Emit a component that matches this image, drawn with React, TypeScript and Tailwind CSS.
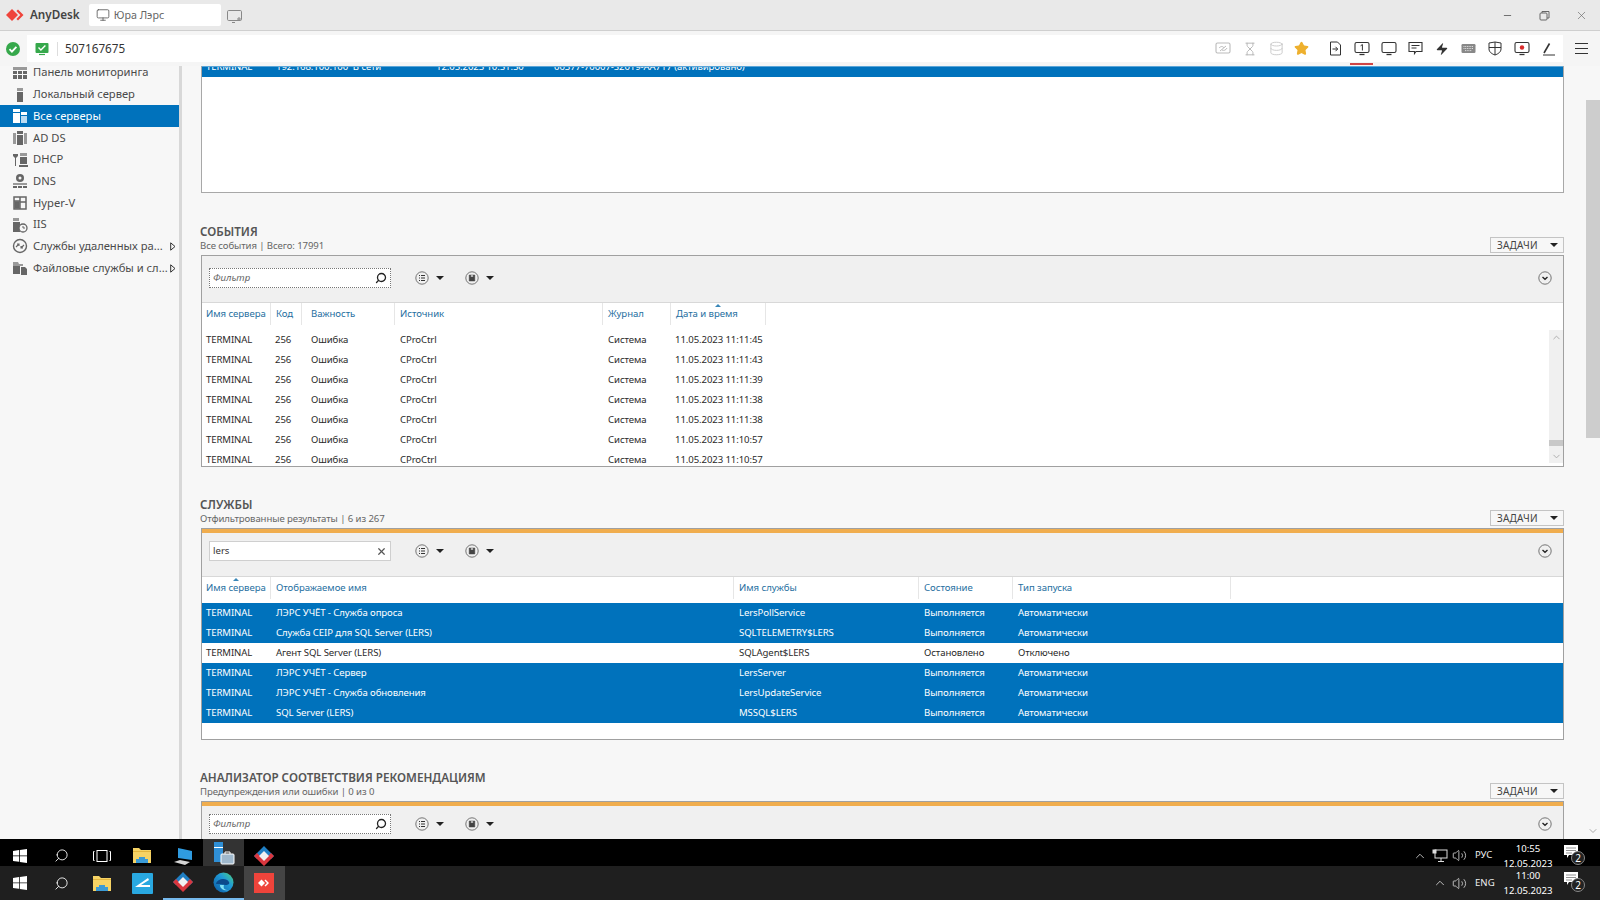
import React from "react";
import { Monitor, Search, X, Minus, Star, Zap, ChevronUp, ChevronDown, Hourglass, Database, Volume2 } from "lucide-react";

const SIDE: [string, string, boolean][] = [
  ["Панель мониторинга", "grid", false],
  ["Локальный сервер", "tower", false],
  ["Все серверы", "servers", false],
  ["AD DS", "adds", false],
  ["DHCP", "dhcp", false],
  ["DNS", "dns", false],
  ["Hyper-V", "hyperv", false],
  ["IIS", "iis", false],
  ["Службы удаленных ра...", "remote", true],
  ["Файловые службы и сл...", "files", true],
];

function SideIcon({ kind, active }: { kind: string; active: boolean }) {
  const c = active ? "#ffffff" : "#666666";
  const d = active ? "#bcdcf2" : "#999999";
  return (
    <svg width="16" height="16" viewBox="0 0 16 16" className="shrink-0">
      {kind === "grid" && (
        <g fill={c}>
          <rect x="1" y="2" width="14" height="3" fill={d} />
          <rect x="1" y="6" width="4" height="3" /><rect x="6" y="6" width="4" height="3" /><rect x="11" y="6" width="4" height="3" />
          <rect x="1" y="10" width="4" height="4" /><rect x="6" y="10" width="4" height="4" /><rect x="11" y="10" width="4" height="4" />
        </g>
      )}
      {kind === "tower" && (<g><rect x="5" y="1" width="6" height="3" fill={d} /><rect x="5" y="5" width="6" height="10" fill={c} /></g>)}
      {kind === "servers" && (<g><rect x="1" y="1" width="7" height="3" fill={c} /><rect x="1" y="5" width="7" height="10" fill={c} /><rect x="9" y="4" width="6" height="3" fill={c} /><rect x="9" y="8" width="6" height="7" fill={d} /></g>)}
      {kind === "adds" && (<g><rect x="1" y="3" width="3" height="11" fill={d} /><rect x="12" y="3" width="3" height="11" fill={d} /><rect x="5" y="1" width="6" height="3" fill={c} /><rect x="5" y="5" width="6" height="10" fill={c} /></g>)}
      {kind === "dhcp" && (<g><path d="M1 2h5v2L4 6v8H3V6L1 4z" fill={c} /><rect x="8" y="1" width="7" height="3" fill={d} /><rect x="8" y="5" width="7" height="7" fill={c} /><rect x="7" y="13" width="9" height="2" fill={c} /></g>)}
      {kind === "dns" && (<g><circle cx="8" cy="5" r="4" fill={c} /><circle cx="8" cy="5" r="1.5" fill="#f7f7f7" /><rect x="1" y="10" width="14" height="2" fill={d} /><rect x="1" y="13" width="4" height="2" fill={c} /><rect x="6" y="13" width="4" height="2" fill={c} /><rect x="11" y="13" width="4" height="2" fill={c} /></g>)}
      {kind === "hyperv" && (<g fill="none" stroke={c} strokeWidth="1.5"><rect x="2" y="2" width="12" height="12" /><path d="M8 2v12M8 7h6M2 6h6" /><rect x="3" y="7" width="4" height="6" fill={c} /></g>)}
      {kind === "iis" && (<g><rect x="1" y="1" width="6" height="3" fill={d} /><rect x="1" y="5" width="7" height="10" fill={c} /><circle cx="11" cy="11" r="4" fill="#f7f7f7" stroke={c} strokeWidth="1.3" /><path d="M11 9v2h2" stroke={c} fill="none" /></g>)}
      {kind === "remote" && (<g fill="none" stroke={c} strokeWidth="1.4"><circle cx="8" cy="8" r="6.5" /><path d="M4 9l3-3M12 7l-3 3M5 6h2v2M11 10H9V8" strokeWidth="1.1" /></g>)}
      {kind === "files" && (<g><path d="M1 2h5l1 2h4v2H1z" fill={d} /><rect x="1" y="6" width="7" height="8" fill={c} /><path d="M9 7h4l2 2v6H9z" fill={c} /></g>)}
    </svg>
  );
}

function Sidebar() {
  return (
    <div className="w-[179px] shrink-0 -mt-[4px] bg-[#f7f7f7]">
      {SIDE.map(([t, k, arrow]) => {
        const active = t === "Все серверы";
        return (
          <div key={t} className={`h-[21.7px] flex items-center pl-[12px] ${active ? "bg-[#0072bc] text-white" : "text-[#4a4a4a]"}`}>
            <SideIcon kind={k} active={active} />
            <span className="ml-[5px] text-[11.2px] whitespace-nowrap w-[134px]">{t}</span>
            {arrow && (
              <svg width="6" height="9" viewBox="0 0 6 9" className="ml-[3px] shrink-0"><path d="M0.7 0.8L5 4.5 0.7 8.2z" fill="#f7f7f7" stroke="#333333" /></svg>
            )}
          </div>
        );
      })}
    </div>
  );
}

function FilterBox({ value }: { value?: string }) {
  return (
    <div className={`w-[182px] h-[20px] bg-white flex items-center pl-[3px] pr-[3px] ${value ? "border border-[#cfcfcf]" : "border border-dotted border-[#777777]"}`}>
      {value ? (
        <span className="flex-1 text-[9.6px] text-[#333333]">{value}</span>
      ) : (
        <span className="flex-1 text-[9.6px] italic text-[#666666]">Фильтр</span>
      )}
      {value ? <X size={11} strokeWidth={2.6} className="text-[#555555]" /> : <Search size={12} strokeWidth={2.6} className="text-[#222222] -scale-x-100" />}
    </div>
  );
}

function Caret() {
  return <span className="ml-[7px] w-0 h-0 border-x-[4px] border-x-transparent border-t-[4px] border-t-[#222222]" />;
}

function CircleBtn({ kind }: { kind: "list" | "save" | "down" }) {
  return (
    <svg width="14" height="14" viewBox="0 0 14 14" fill="none">
      <circle cx="7" cy="7" r="6.2" stroke="#666666" strokeWidth="0.9" />
      {kind === "list" && <path d="M4 4.5h1M6 4.5h4M4 7h1M6 7h4M4 9.5h1M6 9.5h4" stroke="#333333" strokeWidth="1" />}
      {kind === "save" && <path d="M4.2 4h5.6v6H4.2zM5.8 4v2h2.4V4M5.8 10V8h2.4v2" fill="#444444" stroke="#444444" strokeWidth="0.5" />}
      {kind === "down" && <path d="M4.5 6l2.5 2.2L9.5 6" stroke="#222222" strokeWidth="1.4" />}
    </svg>
  );
}

function Toolbar({ value, h }: { value?: string; h: string }) {
  return (
    <div className={`${h} shrink-0 bg-[#f0f0f0] border-b border-[#d8d8d8] flex items-start pl-[7px] pr-[11px]`}>
      <FilterBox value={value} />
      <div className="ml-[24px] h-[20px] flex items-center"><CircleBtn kind="list" /><Caret /></div>
      <div className="ml-[21px] h-[20px] flex items-center"><CircleBtn kind="save" /><Caret /></div>
      <div className="ml-auto h-[20px] flex items-center"><CircleBtn kind="down" /></div>
    </div>
  );
}

function HeaderRow({ cols, sort, h }: { cols: [string, string][]; sort: number; h: string }) {
  return (
    <div className={`${h} shrink-0 bg-white flex items-start`}>
      {cols.map(([t, w], i) => (
        <div key={i} className={`${w} h-[22px] shrink-0 relative border-r border-[#e6e6e6] flex items-center text-[9.6px] tracking-[-0.05px] text-[#1f6f9f] whitespace-nowrap overflow-hidden`}>
          {i === sort && <span className="absolute top-[1px] left-1/2 -translate-x-1/2 w-0 h-0 border-x-[3px] border-x-transparent border-b-[3px] border-b-[#3a87b8]" />}
          {t}
        </div>
      ))}
    </div>
  );
}

function Row({ cells, widths, active }: { cells: string[]; widths: string[]; active?: boolean }) {
  return (
    <div className={`h-[20px] shrink-0 pt-[1px] flex items-center text-[9.6px] tracking-[-0.1px] ${active ? "bg-[#0072bc] text-white" : "bg-white text-[#2a2a2a]"}`}>
      {cells.map((c, i) => (
        <div key={i} className={`${widths[i]} shrink-0 whitespace-nowrap`}>{c}</div>
      ))}
    </div>
  );
}

function SectionHead({ title, sub }: { title: string; sub: string }) {
  return (
    <div className="h-[31px] flex items-start justify-between">
      <div>
        <div className="text-[11.7px] font-semibold leading-[14px] text-[#555555] whitespace-nowrap">{title}</div>
        <div className="text-[9.6px] tracking-[-0.1px] leading-[15px] text-[#666666] whitespace-nowrap">{sub}</div>
      </div>
      <div className="mt-[13px] w-[74px] h-[16px] border border-[#c4c4c4] bg-[#f7f7f7] flex items-center pl-[6px] pr-[5px] text-[10px] text-[#444444] tracking-[0.2px]">
        <span className="flex-1">ЗАДАЧИ</span>
        <span className="w-0 h-0 border-x-[4px] border-x-transparent border-t-[4px] border-t-[#222222]" />
      </div>
    </div>
  );
}

const EV_W = ["w-[69px] pl-[4px]", "w-[31px] pl-[4px]", "w-[93px] pl-[9px]", "w-[208px] pl-[5px]", "w-[68px] pl-[5px]", "w-[95px] pl-[4px]"];
const EV_HW = ["w-[69px] pl-[4px]", "w-[31px] pl-[5px]", "w-[93px] pl-[9px]", "w-[208px] pl-[5px]", "w-[68px] pl-[5px]", "w-[95px] pl-[5px]"];
const EV_H: [string, string][] = [
  ["Имя сервера", EV_HW[0]], ["Код", EV_HW[1]], ["Важность", EV_HW[2]], ["Источник", EV_HW[3]], ["Журнал", EV_HW[4]], ["Дата и время", EV_HW[5]],
];
const EV_T = ["11:11:45", "11:11:43", "11:11:39", "11:11:38", "11:11:38", "11:10:57", "11:10:57"];

const SV_W = ["w-[69px] pl-[4px]", "w-[463px] pl-[5px]", "w-[185px] pl-[5px]", "w-[94px] pl-[5px]", "w-[218px] pl-[5px]"];
const SV_H: [string, string][] = [
  ["Имя сервера", SV_W[0]], ["Отображаемое имя", SV_W[1]], ["Имя службы", SV_W[2]], ["Состояние", SV_W[3]], ["Тип запуска", SV_W[4]],
];
const SV: [string, string, string, string, boolean][] = [
  ["ЛЭРС УЧЁТ - Служба опроса", "LersPollService", "Выполняется", "Автоматически", true],
  ["Служба CEIP для SQL Server (LERS)", "SQLTELEMETRY$LERS", "Выполняется", "Автоматически", true],
  ["Агент SQL Server (LERS)", "SQLAgent$LERS", "Остановлено", "Отключено", false],
  ["ЛЭРС УЧЁТ - Сервер", "LersServer", "Выполняется", "Автоматически", true],
  ["ЛЭРС УЧЁТ - Служба обновления", "LersUpdateService", "Выполняется", "Автоматически", true],
  ["SQL Server (LERS)", "MSSQL$LERS", "Выполняется", "Автоматически", true],
];

function Content() {
  return (
    <div className="flex-1 min-w-0 overflow-hidden pl-[18px] pr-[22px] flex flex-col text-[#333333]">
      <div className="ml-[1px] h-[127px] shrink-0 bg-white border-x border-b border-[#a8a8a8] mb-[1px] flex flex-col">
        <div className="h-[11px] shrink-0 bg-[#0072bc] border-t border-[#5aa5d8] overflow-hidden text-white text-[9.6px] tracking-[-0.1px] leading-[13px]">
          <div className="-mt-[7px] flex whitespace-nowrap">
            <span className="w-[74px] pl-[4px]">TERMINAL</span>
            <span className="w-[160px]">192.168.100.100&nbsp;&nbsp;В сети</span>
            <span className="w-[118px]">12.05.2023 10:51:50</span>
            <span>00377-70007-S2019-AA717 (активировано)</span>
          </div>
        </div>
      </div>

      <div className="mt-[30px]">
        <SectionHead title="СОБЫТИЯ" sub="Все события | Всего: 17991" />
        <div className="ml-[1px] h-[212px] border border-[#a0a0a0] bg-white flex flex-col overflow-hidden">
          <Toolbar h="h-[47px] pt-[12px]" />
          <HeaderRow cols={EV_H} sort={5} h="h-[27px]" />
          <div className="flex-1 min-h-0 flex overflow-hidden">
            <div className="flex-1 min-w-0 flex flex-col">
              {EV_T.map((t, i) => (
                <Row key={i} widths={EV_W} cells={["TERMINAL", "256", "Ошибка", "CProCtrl", "Система", `11.05.2023 ${t}`]} />
              ))}
            </div>
            <div className="w-[14px] h-[133px] shrink-0 bg-[#f0f0f0] flex flex-col items-center">
              <ChevronUp size={11} className="text-[#aaaaaa] mt-[2px]" />
              <div className="mt-[97px] w-full h-[6px] bg-[#c8c8c8]" />
              <ChevronDown size={11} className="text-[#aaaaaa] mt-[5px]" />
            </div>
          </div>
        </div>
      </div>

      <div className="mt-[30px]">
        <SectionHead title="СЛУЖБЫ" sub="Отфильтрованные результаты | 6 из 267" />
        <div className="ml-[1px] h-[212px] border border-[#a0a0a0] bg-white flex flex-col overflow-hidden">
          <div className="h-[4px] shrink-0 bg-[#f0ad4e]" />
          <Toolbar value="lers" h="h-[44px] pt-[8px]" />
          <HeaderRow cols={SV_H} sort={0} h="h-[26px]" />
          <div className="flex-1 min-h-0 flex flex-col">
            {SV.map((r, i) => (
              <Row key={i} widths={SV_W} cells={["TERMINAL", r[0], r[1], r[2], r[3]]} active={r[4]} />
            ))}
          </div>
        </div>
      </div>

      <div className="mt-[30px]">
        <SectionHead title="АНАЛИЗАТОР СООТВЕТСТВИЯ РЕКОМЕНДАЦИЯМ" sub="Предупреждения или ошибки | 0 из 0" />
        <div className="ml-[1px] h-[212px] shrink-0 border border-[#a0a0a0] bg-white flex flex-col">
          <div className="h-[4px] shrink-0 bg-[#f0ad4e]" />
          <Toolbar h="h-[44px] pt-[8px]" />
        </div>
      </div>
    </div>
  );
}

function TopIcon({ children, x }: { children: React.ReactNode; x: string }) {
  return <div className={`${x} h-[20px] flex items-center justify-center shrink-0`}>{children}</div>;
}

function MonitorOutline({ children, stroke = "#333333" }: { children?: React.ReactNode; stroke?: string }) {
  return (
    <svg width="16" height="15" viewBox="0 0 16 15" fill="none">
      <rect x="1" y="1.5" width="14" height="10" rx="1.6" stroke={stroke} strokeWidth="1.1" />
      <path d="M5.5 13.5h5" stroke={stroke} strokeWidth="1.3" />
      {children}
    </svg>
  );
}

function AddressBar() {
  return (
    <div className="h-[35px] shrink-0 bg-[#f5f5f5] flex items-center relative">
      <svg width="16" height="16" viewBox="0 0 16 16" className="ml-[5px] shrink-0">
        <circle cx="8" cy="8" r="7" fill="#36a84b" />
        <path d="M4.5 8.2l2.4 2.4 4.5-4.8" stroke="#fff" strokeWidth="1.8" fill="none" />
      </svg>
      <div className="ml-[6px] w-[1536px] h-[27px] bg-white flex items-center">
        <svg width="14" height="14" viewBox="0 0 14 14" className="ml-[8px] shrink-0">
          <rect x="0.5" y="1" width="13" height="10" rx="1" fill="#36a84b" />
          <path d="M3.5 5.5l2.4 2.4 4.5-4.5" stroke="#fff" strokeWidth="1.4" fill="none" />
          <path d="M4 12.5h6" stroke="#36a84b" strokeWidth="1.2" />
        </svg>
        <div className="ml-[8px] w-px h-[14px] bg-[#dddddd]" />
        <span className="ml-[7px] text-[11.7px] text-[#333333]">507167675</span>
        <div className="flex-1" />
        <div className="flex items-center pr-[1px]">
          <TopIcon x="w-[26px]">
            <svg width="16" height="14" viewBox="0 0 16 14" fill="none"><rect x="1" y="1" width="14" height="10" rx="1.5" stroke="#bbbbbb" strokeWidth="1.1" /><path d="M5 9l6-5M4 6c2-2 4-2 5 0M7 8c2 1 4 0 5-2" stroke="#bbbbbb" /></svg>
          </TopIcon>
          <TopIcon x="w-[27px]"><Hourglass size={14} strokeWidth={1.6} className="text-[#b5b5b5]" /></TopIcon>
          <TopIcon x="w-[26px]"><Database size={15} strokeWidth={1.4} className="text-[#c6c6c6]" /></TopIcon>
          <TopIcon x="w-[24px]"><Star size={15} className="text-[#eeb02e] fill-[#eeb02e]" /></TopIcon>
          <div className="w-[9px]" />
          <TopIcon x="w-[26px]">
            <svg width="13" height="15" viewBox="0 0 13 15" fill="none"><path d="M1.5 1h7l3 3v10h-10z" stroke="#333333" /><path d="M3.5 8h5M6.5 5.8L8.7 8l-2.2 2.2" stroke="#333333" /></svg>
          </TopIcon>
          <div className="w-[27px] h-[20px] flex items-center justify-center relative">
            <MonitorOutline><path d="M8.4 3.5v6M6.6 4.8l1.8-1.3" stroke="#333333" /></MonitorOutline>
            <span className="absolute left-[2px] right-[2px] -bottom-[6px] h-[2px] bg-[#d04545]" />
          </div>
          <TopIcon x="w-[27px]"><MonitorOutline /></TopIcon>
          <TopIcon x="w-[26px]">
            <svg width="15" height="15" viewBox="0 0 15 15" fill="none"><path d="M1 1.5h13v9H8l-1.5 2v-2H1z" stroke="#333333" strokeWidth="1.1" /><path d="M3.5 4.5h8M3.5 7h5" stroke="#333333" /></svg>
          </TopIcon>
          <TopIcon x="w-[27px]"><Zap size={14} strokeWidth={0} className="fill-[#333333]" /></TopIcon>
          <TopIcon x="w-[26px]">
            <svg width="15" height="11" viewBox="0 0 15 11"><rect x="0.5" y="1" width="14" height="9" rx="1.2" fill="#888888" /><path d="M2.5 3.5h10M2.5 5.5h10M4 7.6h7" stroke="#dddddd" strokeDasharray="1 0.7" /></svg>
          </TopIcon>
          <TopIcon x="w-[27px]">
            <svg width="14" height="15" viewBox="0 0 14 15" fill="none"><path d="M1 2l6-1 6 1v6c0 3-3 5-6 6-3-1-6-3-6-6z" stroke="#333333" /><path d="M7 1v13M1 6.5h12" stroke="#333333" /></svg>
          </TopIcon>
          <TopIcon x="w-[27px]"><MonitorOutline><circle cx="8" cy="6.5" r="2.2" fill="#d92b2b" /></MonitorOutline></TopIcon>
          <TopIcon x="w-[27px]">
            <svg width="14" height="14" viewBox="0 0 14 14" fill="none"><path d="M2 11L7.5 1.5" stroke="#333333" strokeWidth="1.6" /><path d="M1 13h12" stroke="#333333" /></svg>
          </TopIcon>
        </div>
      </div>
      <div className="ml-[12px] w-[13px] flex flex-col gap-[4px]">
        <span className="h-px bg-[#333333]" /><span className="h-px bg-[#333333]" /><span className="h-px bg-[#333333]" />
      </div>
    </div>
  );
}

function TitleBar() {
  return (
    <div className="h-[31px] shrink-0 bg-[#e9e9e9] border-b border-[#cfcfcf] flex items-center">
      <svg width="20" height="16" viewBox="0 0 20 16" className="ml-[5px] shrink-0">
        <path d="M7 2l6 6-6 6-6-6z" fill="#ef443b" />
        <path d="M13 2.5l5.5 5.5-5.5 5.5-1.6-1.6L15.3 8l-3.9-3.9z" fill="#ef443b" />
      </svg>
      <span className="ml-[5px] text-[11.7px] font-semibold text-[#444444]">AnyDesk</span>
      <div className="ml-[9px] w-[132px] h-[22px] rounded-[2px] bg-white flex items-center pl-[7px]">
        <Monitor size={14} strokeWidth={1.4} className="text-[#555555]" />
        <span className="ml-[4px] text-[10.7px] text-[#666666]">Юра Лэрс</span>
      </div>
      <svg width="15" height="13" viewBox="0 0 15 13" fill="none" className="ml-[6px] mt-[3px]">
        <rect x="0.5" y="0.5" width="14" height="10" rx="1.2" stroke="#888888" />
        <path d="M5 12.5h3M10 9h4M12 7v4" stroke="#888888" />
      </svg>
      <div className="flex-1" />
      <div className="flex items-center text-[#666666] pr-[12px]">
        <Minus size={11} />
        <svg width="11" height="11" viewBox="0 0 11 11" fill="none" className="ml-[26px]"><rect x="1" y="3" width="7" height="7" rx="1" stroke="#666666" /><path d="M3 3V1.5h7V8H8" stroke="#666666" /></svg>
        <X size={13} strokeWidth={1.2} className="ml-[25px]" />
      </div>
    </div>
  );
}

function Win() {
  return (
    <svg width="14" height="14" viewBox="0 0 14 14" fill="#ffffff">
      <path d="M0 2l6-.9v5.4H0zM6.8 1L14 0v6.5H6.8zM0 7.3h6v5.5L0 12zM6.8 7.3H14V14l-7.2-1z" />
    </svg>
  );
}

function Folder() {
  return (
    <svg width="20" height="17" viewBox="0 0 20 17">
      <path d="M1 1h6l2 2h10v13H1z" fill="#f6d365" />
      <rect x="1" y="4" width="18" height="1" fill="#e2b53f" />
      <path d="M7 10h6v2h3v4H4v-4h3z" fill="#3b9bd6" />
    </svg>
  );
}

function Diamond() {
  return (
    <svg width="20" height="20" viewBox="0 0 20 20">
      <path d="M10 0l10 10-3 3-7-7-7 7-3-3z" fill="#1f7fc4" />
      <path d="M0 10l10 10 10-10-3-3-7 7-7-7z" fill="#d9363e" />
      <path d="M10 5l5 5-5 5-5-5z" fill="#f1f1f1" />
    </svg>
  );
}

function Slot({ children, cls = "" }: { children?: React.ReactNode; cls?: string }) {
  return <div className={`w-[40.7px] h-full flex items-center justify-center shrink-0 ${cls}`}>{children}</div>;
}

function Notice() {
  return (
    <div className="relative w-[24px] h-[22px] shrink-0">
      <svg width="14" height="13" viewBox="0 0 14 13" className="absolute left-0 top-0"><path d="M0 0h14v10H5l-2 3v-3H0z" fill="#ffffff" /><path d="M2 3h10M2 5.5h10M2 8h6" stroke="#777777" strokeWidth="0.8" /></svg>
      <span className="absolute left-[7px] top-[6px] w-[14px] h-[14px] rounded-full border border-[#888888] bg-[#222222] text-white text-[10px] leading-[12px] text-center">2</span>
    </div>
  );
}

function Clock({ a, b }: { a: string; b: string }) {
  return (
    <div className="w-[64px] text-center text-white text-[9.6px] leading-[15px]">
      <div>{a}</div><div>{b}</div>
    </div>
  );
}

function Speaker() {
  return <Volume2 size={15} strokeWidth={1.3} className="text-[#dddddd]" />;
}

function Taskbars() {
  return (
    <div className="shrink-0">
      <div className="h-[27px] bg-black flex items-center">
        <Slot cls="pt-[6px]"><Win /></Slot>
        <Slot cls="pt-[6px]"><Search size={15} strokeWidth={1.4} className="text-white -scale-x-100" /></Slot>
        <Slot cls="pt-[6px]">
          <svg width="18" height="12" viewBox="0 0 18 12" fill="none"><rect x="4" y="0.5" width="10" height="11" stroke="#ffffff" /><path d="M1.5 1.5H.5v9h1M16.5 1.5h1v9h-1" stroke="#ffffff" /></svg>
        </Slot>
        <Slot cls="pt-[6px]"><Folder /></Slot>
        <Slot cls="pt-[6px]">
          <svg width="20" height="20" viewBox="0 0 20 20"><path d="M5 2l14 3v9l-14-2z" fill="#2f9be0" /><path d="M1 16l6-2 10 2-5 3z" fill="#d5d5d5" /></svg>
        </Slot>
        <Slot cls="bg-[#333333] pt-[3px]">
          <svg width="22" height="24" viewBox="0 0 22 24"><rect x="1" y="0" width="9" height="20" fill="#2f8fd6" /><rect x="1" y="5" width="9" height="1" fill="#ffffff" /><rect x="8" y="12" width="13" height="10" rx="1" fill="#9fb8cc" stroke="#ffffff" /><path d="M12 12v-2h5v2" stroke="#ffffff" fill="none" /></svg>
        </Slot>
        <Slot cls="pt-[6px]"><Diamond /></Slot>
        <div className="flex-1" />
        <div className="flex items-center h-full text-white pt-[6px]">
          <ChevronUp size={14} strokeWidth={1.4} className="text-[#dddddd] mr-[5px]" />
          <svg width="16" height="14" viewBox="0 0 16 14" fill="none" className="mr-[4px]"><rect x="3" y="1" width="12" height="8" stroke="#dddddd" /><rect x="0.5" y="0.5" width="4" height="4" fill="#dddddd" /><path d="M9 9v3M6 12.5h6" stroke="#dddddd" /></svg>
          <Speaker />
          <span className="ml-[8px] w-[21px] text-[9.6px] text-[#eeeeee]">РУС</span>
          <Clock a="10:55" b="12.05.2023" />
          <div className="ml-[4px] mr-[12px]"><Notice /></div>
        </div>
      </div>
      <div className="h-[34px] bg-[#1f1f1f] flex items-center">
        <Slot><Win /></Slot>
        <Slot><Search size={15} strokeWidth={1.4} className="text-white -scale-x-100" /></Slot>
        <Slot><Folder /></Slot>
        <Slot>
          <svg width="21" height="21" viewBox="0 0 21 21"><rect width="21" height="21" rx="1" fill="#29a8e0" /><path d="M3 14l13-9 1 2-8 5h9v2z" fill="#ffffff" /></svg>
        </Slot>
        <Slot cls="border-b-2 border-[#76b9ed]"><Diamond /></Slot>
        <Slot cls="border-b-2 border-[#76b9ed]">
          <svg width="21" height="21" viewBox="0 0 21 21">
            <defs>
              <linearGradient id="edgeA" x1="0" y1="1" x2="1" y2="0"><stop offset="0" stopColor="#0c59a4" /><stop offset="0.6" stopColor="#1f9ad6" /><stop offset="1" stopColor="#4fd47a" /></linearGradient>
            </defs>
            <circle cx="10.5" cy="10.5" r="10" fill="url(#edgeA)" />
            <path d="M3 12c1-5 10-7 13-2 1 2-1 3-3 3-3 0-4-1-10-1z" fill="#0b4a8c" />
            <path d="M7 13c0 4 4 6 9 5-5 0-6-2-5-5z" fill="#7fe0f5" />
          </svg>
        </Slot>
        <Slot cls="bg-[#444444]">
          <svg width="20" height="20" viewBox="0 0 20 20">
            <rect width="20" height="20" fill="#ef443b" />
            <path d="M7.5 6.5L11 10l-3.5 3.5L4 10z" fill="#ffffff" />
            <path d="M11.5 6.5L15 10l-3.5 3.5-1-1L13 10l-2.5-2.5z" fill="#ffffff" />
          </svg>
        </Slot>
        <div className="flex-1" />
        <div className="flex items-center h-full text-white">
          <ChevronUp size={14} strokeWidth={1.4} className="text-[#dddddd] mr-[5px]" />
          <Speaker />
          <span className="ml-[8px] w-[21px] text-[9.6px] text-[#eeeeee]">ENG</span>
          <Clock a="11:00" b="12.05.2023" />
          <div className="ml-[4px] mr-[12px]"><Notice /></div>
        </div>
      </div>
    </div>
  );
}

export default function App() {
  return (
    <div className="w-[1600px] h-[900px] overflow-hidden flex flex-col bg-[#f7f7f7] font-['Noto_Sans','Open_Sans',sans-serif]">
      <TitleBar />
      <AddressBar />
      <div className="flex-1 min-h-0 flex overflow-hidden">
        <Sidebar />
        <div className="w-[3px] shrink-0 bg-[#d8d8d8]" />
        <Content />
        <div className="w-[14px] shrink-0 flex flex-col items-center">
          <div className="h-[34px] shrink-0" />
          <div className="w-full h-[338px] shrink-0 bg-[#cdcdcd]" />
          <div className="flex-1" />
          <ChevronDown size={12} className="text-[#aaaaaa] mb-[2px]" />
        </div>
      </div>
      <Taskbars />
    </div>
  );
}
